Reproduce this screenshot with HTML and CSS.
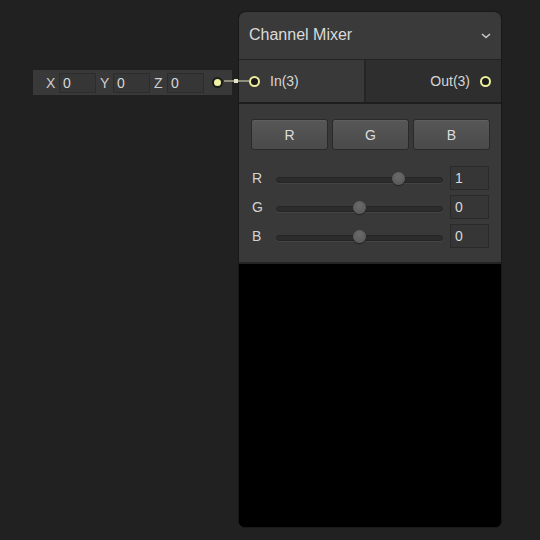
FILE: index.html
```html
<!DOCTYPE html>
<html>
<head>
<meta charset="utf-8">
<link rel="stylesheet" href="styles.css">
</head>
<body>
<div class="canvas">
  <div class="vec">
    <span class="vlabel">X</span><span class="vfield">0</span>
    <span class="vlabel">Y</span><span class="vfield">0</span>
    <span class="vlabel">Z</span><span class="vfield">0</span>
    <span class="vdot"></span>
  </div>
  <div class="node">
    <div class="header">
      <span class="title">Channel Mixer</span>
      <svg class="chev" width="10" height="6" viewBox="0 0 10 6"><path d="M1 1 L5 4.5 L9 1" fill="none" stroke="#c8c8c8" stroke-width="1.6"/></svg>
    </div>
    <div class="ports">
      <div class="port-in"><span class="pcirc"></span><span class="plabel">In(3)</span></div>
      <div class="port-out"><span class="plabel">Out(3)</span><span class="pcirc"></span></div>
    </div>
    <div class="controls">
      <div class="btns">
        <div class="btn">R</div>
        <div class="btn">G</div>
        <div class="btn">B</div>
      </div>
      <div class="srow">
        <span class="slabel">R</span>
        <div class="track"><span class="thumb" style="left: 73.5%"></span></div>
        <div class="num">1</div>
      </div>
      <div class="srow">
        <span class="slabel">G</span>
        <div class="track"><span class="thumb" style="left: 50%"></span></div>
        <div class="num">0</div>
      </div>
      <div class="srow">
        <span class="slabel">B</span>
        <div class="track"><span class="thumb" style="left: 50%"></span></div>
        <div class="num">0</div>
      </div>
    </div>
    <div class="preview"></div>
  </div>
  <div class="wire"><span class="wire-knot"></span></div>
</div>
</body>
</html>
```

FILE: styles.css
```css
html, body {
  margin: 0;
  padding: 0;
  background: #212121;
  width: 540px;
  height: 540px;
  overflow: hidden;
  font-family: "Liberation Sans", Arial, sans-serif;
  color: #d2d2d2;
}
.canvas {
  position: relative;
  width: 540px;
  height: 540px;
}
.vec {
  position: absolute;
  left: 33px;
  top: 70px;
  width: 199px;
  height: 25px;
  background: #393939;
  display: flex;
  align-items: center;
  box-sizing: border-box;
  padding-left: 13px;
  font-size: 14px;
}
.vlabel {
  width: 13px;
  color: #cfcfcf;
}
.vfield {
  width: 37px;
  height: 20px;
  line-height: 19px;
  background: #363636;
  border: 1px solid #2c2c2c;
  padding-left: 3px;
  box-sizing: border-box;
  margin-right: 4px;
  color: #d8d8d8;
}
.vdot {
  width: 7px;
  height: 7px;
  border-radius: 50%;
  background: #f2f2a4;
  box-shadow: 0 0 0 2px #1c1c1c;
  margin-left: 6px;
}
.wire {
  position: absolute;
  left: 224px;
  top: 80px;
  width: 25px;
  height: 2px;
  background: #8c8d7a;
}
.wire-knot {
  position: absolute;
  left: 10px;
  top: -1px;
  width: 4px;
  height: 4px;
  background: #e6e6c8;
}
.node {
  position: absolute;
  left: 238px;
  top: 11px;
  width: 264px;
  height: 517px;
  border: 1px solid #191919;
  border-radius: 7px;
  overflow: hidden;
  box-sizing: border-box;
  background: #000;
  display: flex;
  flex-direction: column;
}
.header {
  height: 48px;
  flex: none;
  background: #3a3a3a;
  display: flex;
  align-items: center;
  padding: 0 10px 1px 10px;
  box-sizing: border-box;
  border-bottom: 1px solid #232323;
}
.title {
  flex: 1;
  font-size: 16px;
  color: #dadada;
}
.chev {
  margin-top: 2px;
}
.ports {
  height: 42px;
  flex: none;
  display: flex;
  border-bottom: 2px solid #1e1e1e;
}
.port-in {
  width: 127px;
  box-sizing: border-box;
  background: #393939;
  display: flex;
  align-items: center;
  padding-left: 10px;
  border-right: 2px solid #252525;
  font-size: 14px;
}
.port-out {
  flex: 1;
  background: #2e2e2e;
  display: flex;
  align-items: center;
  justify-content: flex-end;
  padding-right: 10px;
  font-size: 14px;
}
.pcirc {
  width: 7px;
  height: 7px;
  border-radius: 50%;
  border: 2px solid #eded9b;
  background: #1b1b1b;
}
.port-in .plabel { margin-left: 10px; }
.port-out .plabel { margin-right: 10px; }
.plabel { color: #d6d6d6; }
.controls {
  height: 160px;
  flex: none;
  background: #393939;
  border-bottom: 2px solid #232323;
  padding: 15px 11px 0 12px;
  box-sizing: border-box;
}
.btns {
  display: flex;
  gap: 4px;
  margin-bottom: 16px;
}
.btn {
  flex: 1;
  height: 31px;
  box-sizing: border-box;
  border: 1px solid #2a2a2a;
  border-radius: 3px;
  background: linear-gradient(#575757, #4a4a4a);
  box-shadow: inset 0 1px 0 #606060;
  display: flex;
  align-items: center;
  justify-content: center;
  font-size: 14px;
  color: #dcdcdc;
}
.srow {
  display: flex;
  align-items: center;
  height: 24px;
  margin-bottom: 5px;
}
.slabel {
  width: 25px;
  padding-left: 1px;
  box-sizing: border-box;
  font-size: 14px;
  color: #d2d2d2;
}
.track {
  position: relative;
  width: 165px;
  height: 4px;
  margin-top: 3px;
  background: #2c2c2c;
  border: 1px solid #252525;
  border-radius: 3px;
  box-shadow: 0 1px 0 #454545;
}
.thumb {
  position: absolute;
  top: 50%;
  width: 13px;
  height: 13px;
  margin-left: -6.5px;
  margin-top: -8px;
  border-radius: 50%;
  background: radial-gradient(circle at 50% 35%, #6a6a6a, #555555);
  box-shadow: 0 1px 1px #222;
}
.num {
  margin-left: 7px;
  width: 39px;
  height: 24px;
  box-sizing: border-box;
  background: #363636;
  border: 1px solid #2a2a2a;
  font-size: 14px;
  padding-left: 4px;
  line-height: 22px;
  color: #d8d8d8;
}
.preview {
  flex: 1;
  background: #000;
}
```
